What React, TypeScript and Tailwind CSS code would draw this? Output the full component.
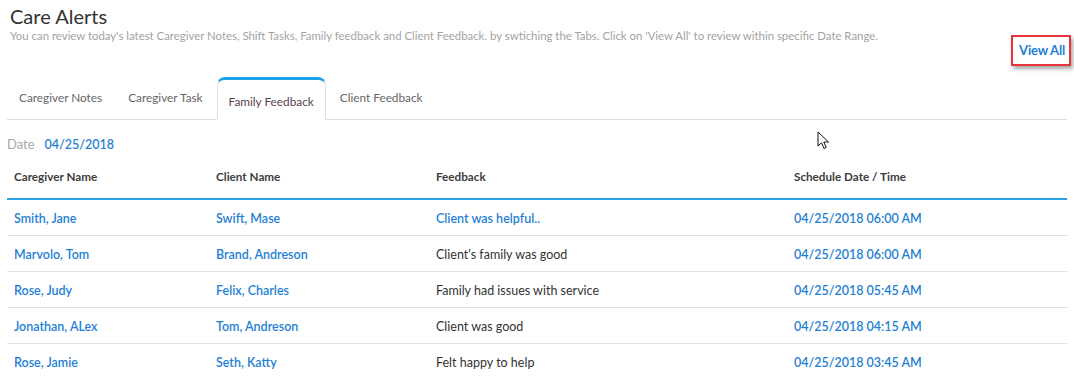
const rows = [
  { caregiver: "Smith, Jane", client: "Swift, Mase", feedback: "Client was helpful..", highlight: true, date: "04/25/2018 06:00 AM" },
  { caregiver: "Marvolo, Tom", client: "Brand, Andreson", feedback: "Client's family was good", highlight: false, date: "04/25/2018 06:00 AM" },
  { caregiver: "Rose, Judy", client: "Felix, Charles", feedback: "Family had issues with service", highlight: false, date: "04/25/2018 05:45 AM" },
  { caregiver: "Jonathan, ALex", client: "Tom, Andreson", feedback: "Client was good", highlight: false, date: "04/25/2018 04:15 AM" },
  { caregiver: "Rose, Jamie", client: "Seth, Katty", feedback: "Felt happy to help", highlight: false, date: "04/25/2018 03:45 AM" }
];

const tabs = ["Caregiver Notes", "Caregiver Task", "Family Feedback", "Client Feedback"];

const Cursor = () => (
  <svg className="absolute left-[817px] top-[131px]" width="13" height="20" viewBox="0 0 13 20">
    <path
      d="M1 1 L1 15 L4.5 11.8 L7 17.5 L9.2 16.5 L6.8 11 L11.5 11 Z"
      fill="#fff"
      stroke="#111"
      strokeWidth="1"
      strokeLinejoin="round"
    />
  </svg>
);

const App = () => {
  const active = 2;

  return (
    <div className="relative w-[1074px] h-[377px] overflow-hidden bg-white font-['Lato',sans-serif]">
      <div className="flex justify-between items-start">
        <div className="pl-[10px] pt-[4px]">
          <h1 className="text-[20px] leading-[24px] text-[#333]">Care Alerts</h1>
          <p className="text-[11.4px] leading-[14px] text-[#a3a3a3] mt-[1px]">
            You can review today's latest Caregiver Notes, Shift Tasks, Family feedback and Client Feedback. by
            swtiching the Tabs. Click on 'View All' to review within specific Date Range.
          </p>
        </div>
        <div className="mt-[35px] mr-[3px] border-2 border-[#e8333a] bg-white shadow-[2px_3px_4px_rgba(0,0,0,0.35)] pl-[6px] pr-[4px] h-[31px] flex items-center">
          <a className="text-[13px] font-bold text-[#1f7fd4] tracking-[-0.2px]">View All</a>
        </div>
      </div>

      <div className="mx-[7px] mt-[11px] flex items-end h-[43px] border-b border-[#dcdcdc]">
        {tabs.map((t, i) =>
          i === active ? (
            <div
              key={t}
              className="relative -mb-px mr-[2px] h-[43px] px-[11px] flex items-center pt-[5px] bg-white border border-[#e0e0e0] border-t-[3px] border-t-[#1da1e8] border-b-white rounded-t-[8px]"
            >
              <span className="text-[11.8px] text-[#5c3d4e]">{t}</span>
            </div>
          ) : (
            <div key={t} className="h-[42px] px-[12px] mr-[2px] flex items-center">
              <span className="text-[11.8px] text-[#666]">{t}</span>
            </div>
          )
        )}
      </div>

      <div className="mx-[7px] h-[48px] pt-[2px] flex items-center gap-[10px]">
        <span className="text-[13px] text-[#a8a8a8]">Date</span>
        <span className="text-[12.5px] font-semibold text-[#1f7fd4]">04/25/2018</span>
      </div>

      <div className="mx-[7px]">
        <div className="grid grid-cols-[202px_220px_358px_1fr] pl-[7px] h-[32px] items-start border-b-2 border-[#29a3e6] text-[11.7px] leading-[16px] font-bold text-[#3d3d3d]">
          <div>Caregiver Name</div>
          <div>Client Name</div>
          <div>Feedback</div>
          <div>Schedule Date / Time</div>
        </div>
        {rows.map((r) => (
          <div
            key={r.caregiver}
            className="grid grid-cols-[202px_220px_358px_1fr] pl-[7px] pt-[3px] h-[36px] items-center border-b border-[#e2e2e2] text-[12.5px]"
          >
            <div className="font-semibold text-[#1f7fd4]">{r.caregiver}</div>
            <div className="font-semibold text-[#1f7fd4]">{r.client}</div>
            <div className={r.highlight ? "font-semibold text-[#1f7fd4]" : "text-[#333]"}>{r.feedback}</div>
            <div className="font-semibold text-[#1f7fd4]">{r.date}</div>
          </div>
        ))}
      </div>

      <Cursor />
    </div>
  );
};

export default App;
